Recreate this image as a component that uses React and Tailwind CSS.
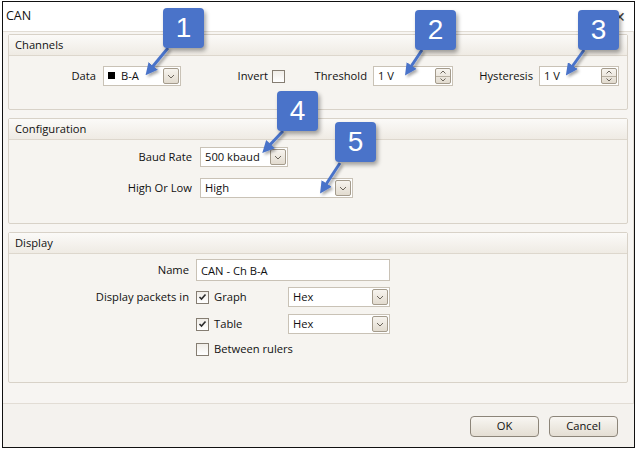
import { useState } from 'react';

const font = { fontFamily: '"Open Sans", "Noto Sans", sans-serif' };

function DropButton() {
  return (
    <span className="flex h-[16px] w-[16px] shrink-0 items-center justify-center rounded-[2px] border border-[#a49b8c] bg-gradient-to-b from-[#f7f4ef] to-[#e2dbcf]">
      <svg width="8" height="5" viewBox="0 0 8 5">
        <path d="M1 1 L4 4 L7 1" fill="none" stroke="#6b655c" strokeWidth="1" />
      </svg>
    </span>
  );
}

function Combo({ width, children }) {
  return (
    <div
      className="flex h-[20px] shrink-0 items-center justify-between border border-[#c9c2b6] bg-white pl-[4px] pr-[1px]"
      style={{ width }}
    >
      <span className="flex items-center gap-[6px] text-[#111]">{children}</span>
      <DropButton />
    </div>
  );
}

function Spin({ value }) {
  return (
    <div className="flex h-[20px] w-[80px] shrink-0 items-center justify-between border border-[#c9c2b6] bg-white pl-[4px] pr-[1px]">
      <span>{value}</span>
      <span className="flex h-[16px] w-[16px] flex-col overflow-hidden rounded-[2px] border border-[#a49b8c] bg-gradient-to-b from-[#f7f4ef] to-[#e2dbcf]">
        <span className="flex flex-1 items-center justify-center border-b border-[#b8b0a2]">
          <svg width="6" height="4" viewBox="0 0 6 4">
            <path d="M0.5 3.5 L3 1 L5.5 3.5" fill="none" stroke="#6b655c" />
          </svg>
        </span>
        <span className="flex flex-1 items-center justify-center">
          <svg width="6" height="4" viewBox="0 0 6 4">
            <path d="M0.5 0.5 L3 3 L5.5 0.5" fill="none" stroke="#6b655c" />
          </svg>
        </span>
      </span>
    </div>
  );
}

function Check({ checked }) {
  return (
    <span className="flex h-[13px] w-[13px] shrink-0 items-center justify-center border border-[#857d72] bg-gradient-to-b from-[#f0ede8] to-white">
      {checked && (
        <svg width="9" height="8" viewBox="0 0 9 8">
          <path d="M1.5 4 L3.5 6 L7.5 1.5" fill="none" stroke="#2b2b2b" strokeWidth="1.6" />
        </svg>
      )}
    </span>
  );
}

function Group({ title, className, children }) {
  return (
    <div className={'flex shrink-0 flex-col rounded-[2px] border border-[#d8d2c8] bg-[#f6f4f0] ' + className}>
      <div className="flex h-[21px] items-center border-b border-[#ddd7cd] bg-gradient-to-b from-[#fbfaf8] to-[#efebe4] pl-[6px] text-[#111]">
        {title}
      </div>
      {children}
    </div>
  );
}

function Callout({ n, className }) {
  return (
    <div
      className={
        'absolute flex h-[40px] w-[41px] items-center justify-center rounded-[4px] bg-[#4a73c9] text-[28px] leading-none text-white shadow-[2px_3px_4px_rgba(0,0,0,0.35)] ' +
        className
      }
      style={{ fontFamily: '"Liberation Sans", Arial, sans-serif' }}
    >
      {n}
    </div>
  );
}

// leader lines from each number box down to the control it names
const arrows = [
  [168, 48, 149, 71],
  [422, 50, 408, 71],
  [584, 50, 569, 71],
  [283, 131, 266, 149],
  [340, 163, 323, 189],
];

function Arrows() {
  return (
    <svg className="pointer-events-none absolute inset-0" width="637" height="450">
      <defs>
        <marker id="head" markerWidth="4" markerHeight="4" refX="2.2" refY="2" orient="auto">
          <path d="M0 0 L4 2 L0 4 Z" fill="#4a73c9" />
        </marker>
        <filter id="sh" x="-50%" y="-50%" width="200%" height="200%">
          <feDropShadow dx="2" dy="2" stdDeviation="1.5" floodOpacity="0.35" />
        </filter>
      </defs>
      {arrows.map(([x1, y1, x2, y2], i) => (
        <line
          key={i}
          x1={x1}
          y1={y1}
          x2={x2}
          y2={y2}
          stroke="#4a73c9"
          strokeWidth="3"
          markerEnd="url(#head)"
          filter="url(#sh)"
        />
      ))}
    </svg>
  );
}

export default function App() {
  const [name, setName] = useState('CAN - Ch B-A');

  return (
    <div className="relative h-[450px] w-[637px] bg-white text-[11.2px] text-[#111]" style={font}>
      <div className="absolute left-[2px] top-[1px] flex h-[447px] w-[633px] flex-col border border-[#111] bg-[#f4f2ee]">
        {/* title bar */}
        <div className="flex h-[29px] shrink-0 items-center justify-between bg-white pl-[3px] pr-[8px] text-[12.5px]">
          <span>CAN</span>
          <span className="text-[14px] text-[#444]">✕</span>
        </div>

        {/* settings panel */}
        <div className="flex h-[373px] shrink-0 flex-col gap-[8px] border-y border-r border-[#e2ddd5] bg-[#f7f5f2] px-[5px] pt-[2px]">
          <Group title="Channels" className="h-[76px]">
            <div className="flex items-center pt-[10px]">
              <span className="mr-[7px] w-[87px] shrink-0 text-right">Data</span>
              <Combo width="78px">
                <span className="h-[7px] w-[7px] bg-black" />
                <span>B-A</span>
              </Combo>
              <span className="mr-[4px] w-[87px] shrink-0 text-right">Invert</span>
              <Check />
              <span className="mr-[6px] w-[82px] shrink-0 text-right">Threshold</span>
              <Spin value="1 V" />
              <span className="mr-[6px] w-[80px] shrink-0 text-right">Hysteresis</span>
              <Spin value="1 V" />
            </div>
          </Group>

          <Group title="Configuration" className="h-[106px]">
            <div className="grid grid-cols-[183px_auto] items-center gap-x-[8px] gap-y-[11px] pt-[7px]">
              <span className="text-right">Baud Rate</span>
              <Combo width="88px">500 kbaud</Combo>
              <span className="text-right">High Or Low</span>
              <Combo width="153px">High</Combo>
            </div>
          </Group>

          <Group title="Display" className="h-[151px]">
            <div className="grid grid-cols-[180px_auto] items-center gap-x-[7px] pt-[5px]">
              <span className="text-right">Name</span>
              <input
                value={name}
                onChange={(e) => setName(e.target.value)}
                className="h-[22px] w-[194px] border border-[#c9c2b6] bg-white px-[4px] outline-none"
              />
              <span className="mt-[6px] text-right">Display packets in</span>
              <div className="mt-[6px] flex items-center">
                <Check checked />
                <span className="ml-[5px] w-[74px]">Graph</span>
                <Combo width="102px">Hex</Combo>
              </div>
              <span />
              <div className="mt-[7px] flex items-center">
                <Check checked />
                <span className="ml-[5px] w-[74px]">Table</span>
                <Combo width="102px">Hex</Combo>
              </div>
              <span />
              <div className="mt-[7px] flex items-center">
                <Check />
                <span className="ml-[5px]">Between rulers</span>
              </div>
            </div>
          </Group>
        </div>

        {/* footer */}
        <div className="flex flex-1 items-center justify-end gap-[10px] pr-[16px] pt-[1px]">
          <button className="h-[21px] w-[69px] rounded-[4px] border border-[#8c8579] bg-gradient-to-b from-[#f8f6f2] to-[#e4ded3]">
            OK
          </button>
          <button className="h-[21px] w-[69px] rounded-[4px] border border-[#8c8579] bg-gradient-to-b from-[#f8f6f2] to-[#e4ded3]">
            Cancel
          </button>
        </div>
      </div>

      <Arrows />
      <Callout n="1" className="left-[163px] top-[8px]" />
      <Callout n="2" className="left-[415px] top-[10px]" />
      <Callout n="3" className="left-[578px] top-[10px]" />
      <Callout n="4" className="left-[277px] top-[91px]" />
      <Callout n="5" className="left-[335px] top-[122px]" />
    </div>
  );
}
